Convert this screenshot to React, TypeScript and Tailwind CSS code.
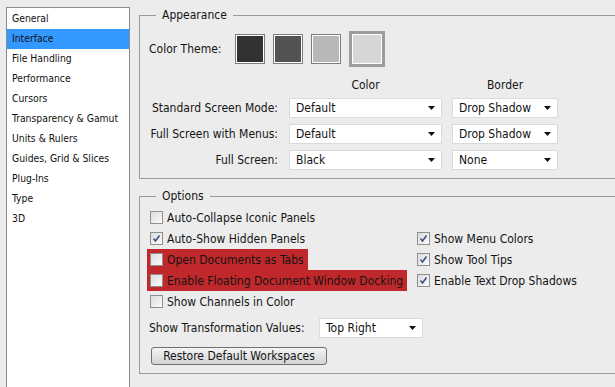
import React from "react";

const font: React.CSSProperties = {
  fontFamily: "'DejaVu Sans Condensed', 'DejaVu Sans', sans-serif",
  fontStretch: "condensed",
};

function Arrow() {
  return (
    <svg width="7" height="4" viewBox="0 0 7 4" className="shrink-0">
      <polygon points="0,0 7,0 3.5,4" fill="#111" />
    </svg>
  );
}

function Select({ value, w }: { value: string; w: string }) {
  return (
    <div className={`${w} h-[20px] bg-white border border-[#dadada] flex items-center justify-between pl-[6px] pr-[6px] text-[12px] text-[#111]`}>
      <span>{value}</span>
      <Arrow />
    </div>
  );
}

function Check({ checked }: { checked?: boolean }) {
  return (
    <div className="w-[13px] h-[13px] border border-[#8e8f8f] bg-gradient-to-br from-[#dcdcdc] to-[#fbfbfb] flex items-center justify-center shrink-0">
      {checked && (
        <svg width="9" height="9" viewBox="0 0 9 9">
          <path d="M1.5 4.5 L3.5 7 L7.5 1.5" stroke="#3c4f8c" strokeWidth="1.6" fill="none" />
        </svg>
      )}
    </div>
  );
}

function Opt({ label, checked, red }: { label: string; checked?: boolean; red?: boolean }) {
  return (
    <div className={`h-full w-fit flex items-center gap-[4px] pl-[3px] pr-[4px] ${red ? "bg-[#c0282c]" : ""}`}>
      <Check checked={checked} />
      <span className="text-[12px] text-[#141414] whitespace-nowrap">{label}</span>
    </div>
  );
}

function Swatch({ color, selected }: { color: string; selected?: boolean }) {
  if (selected) {
    return (
      <div className="w-[36px] h-[36px] border-[3px] border-[#9c9c9c] flex items-center justify-center -my-[3px]">
        <div className="w-[30px] h-[30px] border border-white" style={{ background: color }} />
      </div>
    );
  }
  return (
    <div className="w-[30px] h-[30px] border border-[#7d7d7d] p-0">
      <div className="w-full h-full border border-white" style={{ background: color }} />
    </div>
  );
}

const items = [
  "General",
  "Interface",
  "File Handling",
  "Performance",
  "Cursors",
  "Transparency & Gamut",
  "Units & Rulers",
  "Guides, Grid & Slices",
  "Plug-Ins",
  "Type",
  "3D",
];

export default function App() {
  return (
    <div className="w-[615px] h-[387px] bg-[#ececec] flex overflow-hidden text-[#141414]" style={font}>
      <div className="ml-[6px] mt-[7px] w-[124px] h-[380px] bg-white border-l border-t border-r border-[#8b8b8b] pt-[1px] shrink-0">
        {items.map((it) => (
          <div
            key={it}
            className={`h-[20px] flex items-center pl-[5px] text-[10.3px] whitespace-nowrap ${it === "Interface" ? "bg-[#3399ff] text-[#111]" : "text-[#111]"}`}
          >
            {it}
          </div>
        ))}
      </div>

      <div className="ml-[9px] flex flex-col w-[490px] shrink-0">
        <fieldset className="mt-[8px] h-[171px] border border-[#9a9a9a] border-r-0 pl-[9px] pt-[8px]">
          <legend className="ml-[7px] px-[6px] text-[12px] text-[#141414] leading-[14px]">Appearance</legend>
          <div className="flex items-center h-[30px] mt-[4px]">
            <span className="text-[12px] w-[86px]">Color Theme:</span>
            <div className="flex items-center gap-[8px]">
              <Swatch color="#323232" />
              <Swatch color="#535353" />
              <Swatch color="#b8b8b8" />
              <Swatch color="#d6d6d6" selected />
            </div>
          </div>
          <div className="flex mt-[13px] h-[16px] items-center text-[12px]">
            <div className="w-[140px]" />
            <div className="w-[153px] text-center">Color</div>
            <div className="w-[10px]" />
            <div className="w-[106px] text-center">Border</div>
          </div>
          {[
            ["Standard Screen Mode:", "Default", "Drop Shadow"],
            ["Full Screen with Menus:", "Default", "Drop Shadow"],
            ["Full Screen:", "Black", "None"],
          ].map(([l, a, b], i) => (
            <div key={l} className={`flex items-center ${i === 0 ? "mt-[5px]" : "mt-[6px]"}`}>
              <div className="w-[129px] text-right text-[12px] whitespace-nowrap">{l}</div>
              <div className="w-[11px]" />
              <Select value={a} w="w-[153px]" />
              <div className="w-[10px]" />
              <Select value={b} w="w-[106px]" />
            </div>
          ))}
        </fieldset>

        <fieldset className="mt-[10px] h-[185px] border border-[#9a9a9a] border-r-0 pl-[7px] pt-[4px]">
          <legend className="ml-[9px] px-[6px] text-[12px] text-[#141414] leading-[14px]">Options</legend>
          <div className="grid grid-cols-[267px_auto] auto-rows-[21px]">
            <div className="col-span-2 h-[21px]"><Opt label="Auto-Collapse Iconic Panels" /></div>
            <Opt label="Auto-Show Hidden Panels" checked />
            <Opt label="Show Menu Colors" checked />
            <Opt label="Open Documents as Tabs" red />
            <Opt label="Show Tool Tips" checked />
            <Opt label="Enable Floating Document Window Docking" red />
            <Opt label="Enable Text Drop Shadows" checked />
            <div className="col-span-2 h-[21px]"><Opt label="Show Channels in Color" /></div>
          </div>
          <div className="flex items-center mt-[6px] pl-[2px]">
            <span className="text-[12px] w-[170px] whitespace-nowrap">Show Transformation Values:</span>
            <Select value="Top Right" w="w-[104px]" />
          </div>
          <div className="mt-[9px] ml-[4px] w-[176px] h-[18px] rounded-[3px] border border-[#707070] bg-gradient-to-b from-[#f4f4f4] to-[#d4d4d4] flex items-center justify-center text-[12px] whitespace-nowrap">
            Restore Default Workspaces
          </div>
        </fieldset>
      </div>
    </div>
  );
}
